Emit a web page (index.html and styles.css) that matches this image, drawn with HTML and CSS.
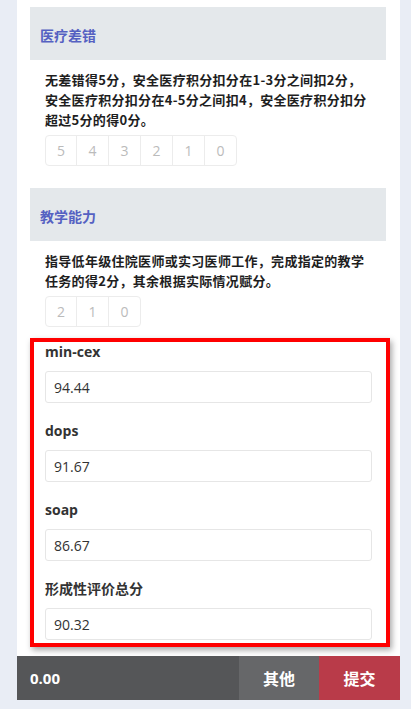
FILE: index.html
```html
<!DOCTYPE html>
<html lang="zh">
<head>
<meta charset="utf-8">
<link rel="stylesheet" href="styles.css">
</head>
<body>
<div class="card">
  <div class="section">
    <div class="sec-head">医疗差错</div>
    <div class="desc">无差错得5分，安全医疗积分扣分在1-3分之间扣2分，<br>安全医疗积分扣分在4-5分之间扣4，安全医疗积分扣分<br>超过5分的得0分。</div>
    <div class="scores"><span>5</span><span>4</span><span>3</span><span>2</span><span>1</span><span>0</span></div>
  </div>
  <div class="section last">
    <div class="sec-head">教学能力</div>
    <div class="desc">指导低年级住院医师或实习医师工作，完成指定的教学<br>任务的得2分，其余根据实际情况赋分。</div>
    <div class="scores"><span>2</span><span>1</span><span>0</span></div>
  </div>
  <div class="highlight">
    <div class="field">
      <div class="label">min-cex</div>
      <div class="input">94.44</div>
    </div>
    <div class="field">
      <div class="label">dops</div>
      <div class="input">91.67</div>
    </div>
    <div class="field">
      <div class="label">soap</div>
      <div class="input">86.67</div>
    </div>
    <div class="field">
      <div class="label">形成性评价总分</div>
      <div class="input">90.32</div>
    </div>
  </div>
  <div class="bar">
    <div class="total">0.00</div>
    <div class="other">其他</div>
    <div class="submit">提交</div>
  </div>
</div>
</body>
</html>
```
FILE: styles.css
```css
html, body {
  margin: 0;
  padding: 0;
  background: #e9edf5;
  font-family: "Open Sans", "Noto Sans CJK SC", sans-serif;
  color: #333;
}
.card {
  margin: 0 11px 0 17px;
  width: 383px;
  background: #fff;
  padding-top: 7px;
  box-sizing: border-box;
}
.section {
  padding: 0 14px 0 13px;
  margin-bottom: 22px;
}
.section.last {
  margin-bottom: 11px;
}
.sec-head {
  height: 53px;
  background: #e4e8eb;
  padding-left: 10px;
  display: flex;
  align-items: center;
  padding-top: 2px;
  box-sizing: border-box;
  font-family: "Noto Sans CJK SC", sans-serif;
  font-weight: 700;
  font-size: 14px;
  color: #5561c2;
}
.desc {
  margin-top: 10px;
  padding-left: 15px;
  white-space: nowrap;
  font-family: "Noto Sans CJK SC", sans-serif;
  font-weight: 700;
  font-size: 13px;
  letter-spacing: 0.3px;
  line-height: 20px;
  color: #1e1e1e;
}
.scores {
  margin: 5px 0 0 15px;
  display: inline-flex;
  border: 1px solid #ececec;
  border-radius: 4px;
}
.scores span {
  width: 31px;
  height: 29px;
  display: flex;
  align-items: center;
  justify-content: center;
  font-size: 14px;
  color: #bbb;
  border-left: 1px solid #ececec;
}
.scores span:first-child {
  border-left: none;
  width: 30px;
}
.highlight {
  margin: 0 10px 9px 13px;
  border: 4px solid #ff0000;
  box-shadow: 2px 3px 6px rgba(0, 0, 0, 0.35);
  padding: 0 14px 3px 11px;
}
.field {
  margin-top: 18px;
}
.field:first-child {
  margin-top: 0;
}
.label {
  font-weight: 700;
  font-size: 14px;
  line-height: 20px;
  color: #333;
  font-family: "Open Sans", "Noto Sans CJK SC", sans-serif;
}
.input {
  margin-top: 9px;
  height: 32px;
  border: 1px solid #e6e6e6;
  border-radius: 3px;
  box-sizing: border-box;
  padding-left: 8px;
  display: flex;
  align-items: center;
  font-size: 14px;
  color: #333;
}
.bar {
  display: flex;
  height: 44px;
  color: #fff;
  font-weight: 700;
  font-size: 15px;
  font-family: "Open Sans", "Noto Sans CJK SC", sans-serif;
}
.total {
  flex: 1;
  background: #555658;
  display: flex;
  align-items: center;
  padding-left: 13px;
}
.other {
  width: 80px;
  background: #666769;
  display: flex;
  align-items: center;
  justify-content: center;
  font-size: 16px;
}
.submit {
  width: 81px;
  background: #b93b49;
  display: flex;
  align-items: center;
  justify-content: center;
  font-size: 16px;
}
```
